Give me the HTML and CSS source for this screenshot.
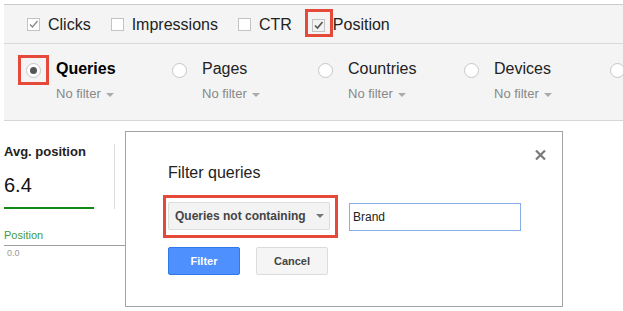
FILE: index.html
```html
<!DOCTYPE html>
<html lang="en">

<head>
    <meta charset="UTF-8">
    <meta name="viewport" content="width=device-width, initial-scale=1.0">
    <title>Search Analytics</title>
    <link rel="stylesheet" href="styles.css">
</head>

<body>
    <div class="panel">
        <div class="metrics">
            <label class="metric">
                <span class="box"><svg width="13" height="13" viewBox="0 0 13 13"><path d="M3 6.5 5.5 9 10.5 3" fill="none" stroke="#8a8a8a" stroke-width="1.4"/></svg></span>
                Clicks
            </label>
            <label class="metric">
                <span class="box"></span>
                Impressions
            </label>
            <label class="metric">
                <span class="box"></span>
                CTR
            </label>
            <label class="metric">
                <span class="hl hl-check">
                    <span class="box box-on"><svg width="13" height="13" viewBox="0 0 13 13"><path d="M3 6.5 5.5 9 10.5 3" fill="none" stroke="#555" stroke-width="1.6"/></svg></span>
                </span>
                Position
            </label>
        </div>
        <div class="dims">
            <div class="dim">
                <span class="hl hl-radio"><span class="radio on"></span></span>
                <div>
                    <div class="dim-name active">Queries</div>
                    <div class="dim-filter">No filter<span class="caret"></span></div>
                </div>
            </div>
            <div class="dim">
                <span class="radio"></span>
                <div>
                    <div class="dim-name">Pages</div>
                    <div class="dim-filter">No filter<span class="caret"></span></div>
                </div>
            </div>
            <div class="dim">
                <span class="radio"></span>
                <div>
                    <div class="dim-name">Countries</div>
                    <div class="dim-filter">No filter<span class="caret"></span></div>
                </div>
            </div>
            <div class="dim">
                <span class="radio"></span>
                <div>
                    <div class="dim-name">Devices</div>
                    <div class="dim-filter">No filter<span class="caret"></span></div>
                </div>
            </div>
            <div class="dim">
                <span class="radio"></span>
            </div>
        </div>
    </div>

    <div class="summary">
        <div class="card">
            <div class="card-title">Avg. position</div>
            <div class="card-value">6.4</div>
        </div>
        <div class="divider"></div>
    </div>

    <div class="chart">
        <div class="chart-label">Position</div>
        <div class="axis">0.0</div>
    </div>

    <div class="dialog">
        <span class="close"><svg width="11" height="10" viewBox="0 0 11 10"><path d="M1 0.5 10 9.5M10 0.5 1 9.5" stroke="#7a7a7a" stroke-width="2.2"/></svg></span>
        <h3 class="dialog-title">Filter queries</h3>
        <div class="filter-row">
            <span class="hl hl-select">
                <span class="select">Queries not containing<span class="select-arrow"></span></span>
            </span>
            <input class="text-input" type="text" value="Brand">
        </div>
        <div class="buttons">
            <button class="btn btn-blue">Filter</button>
            <button class="btn">Cancel</button>
        </div>
    </div>
</body>

</html>
```

FILE: styles.css
```css
* {
    padding: 0;
    margin: 0;
    box-sizing: border-box;
}

body {
    font-family: "Liberation Sans", Arial, sans-serif;
    color: #222;
    overflow: hidden;
}

.panel {
    margin: 4px 0 0 4px;
    background: #f4f4f4;
    border-top: 1px solid #ccc;
    border-bottom: 1px solid #d6d6d6;
}

/* metric checkboxes */
.metrics {
    display: flex;
    align-items: center;
    gap: 20px;
    height: 39px;
    padding: 1px 0 0 23px;
    border-bottom: 1px solid #d9d9d9;
}

.metric {
    display: flex;
    align-items: center;
    gap: 8px;
    font-size: 16px;
    color: #222;
}

.box {
    display: block;
    width: 13px;
    height: 13px;
    border: 1px solid #c3c3c3;
    background: #fff;
}

.box svg {
    display: block;
    margin: -1px 0 0 -1px;
}

.box-on {
    background: #f2f2f2;
}

.hl {
    display: block;
    border: 3px solid #e5493a;
}

.hl-check {
    padding: 7px 5px 2px 4px;
    margin: 0 -8px 4px -7px;
}

/* dimension radios */
.dims {
    display: flex;
    height: 76px;
    padding: 15px 0 0 22px;
    overflow: hidden;
}

.dim {
    flex: 0 0 146px;
    display: flex;
    align-items: flex-start;
    gap: 15px;
}

.radio {
    display: block;
    flex: none;
    width: 15px;
    height: 15px;
    margin-top: 4px;
    border: 1px solid #c6c6c6;
    border-radius: 50%;
    background: #fff;
    position: relative;
}

.radio.on::after {
    content: "";
    position: absolute;
    left: 3px;
    top: 3px;
    width: 7px;
    height: 7px;
    border-radius: 50%;
    background: #555;
}

.hl-radio {
    padding: 5px 5px 4px 5px;
    margin: -4px -8px 0 -8px;
}

.hl-radio .radio {
    margin-top: 0;
}

.dim-name {
    font-size: 16px;
    line-height: 20px;
    color: #222;
    white-space: nowrap;
}

.dim-name.active {
    font-weight: bold;
    color: #000;
}

.dim-filter {
    margin-top: 7px;
    font-size: 13px;
    line-height: 16px;
    color: #888;
}

.caret {
    display: inline-block;
    margin-left: 5px;
    vertical-align: middle;
    border-top: 4px solid #aaa;
    border-left: 4px solid transparent;
    border-right: 4px solid transparent;
}

/* summary card */
.summary {
    display: flex;
    margin-left: 4px;
    padding-top: 23px;
}

.card {
    width: 90px;
    padding-bottom: 10px;
    border-bottom: 2px solid #138a17;
}

.card-title {
    font-size: 13px;
    line-height: 16px;
    font-weight: bold;
    color: #222;
    white-space: nowrap;
}

.card-value {
    margin-top: 13px;
    font-size: 20px;
    line-height: 24px;
    color: #111;
}

.divider {
    width: 1px;
    margin-left: 20px;
    background: #ddd;
}

.chart {
    width: 450px;
    margin: 20px 0 0 4px;
}

.chart-label {
    font-size: 11px;
    line-height: 13px;
    padding-bottom: 3px;
    color: #3f9a3f;
    border-bottom: 1px solid #9e9e9e;
}

.axis {
    margin-top: 2px;
    padding-left: 3px;
    font-size: 9px;
    line-height: 11px;
    color: #999;
}

/* dialog */
.dialog {
    position: absolute;
    left: 125px;
    top: 131px;
    width: 438px;
    height: 176px;
    padding: 31px 0 0 42px;
    background: #fff;
    border: 1px solid #a3a3a3;
}

.close {
    position: absolute;
    left: 409px;
    top: 18px;
    line-height: 0;
}

.dialog-title {
    font-size: 16px;
    line-height: 20px;
    font-weight: normal;
    color: #222;
}

.filter-row {
    display: flex;
    align-items: center;
    margin-top: 12px;
}

.hl-select {
    padding: 4px 5px 5px 2px;
    margin-left: -5px;
}

.select {
    display: flex;
    align-items: center;
    width: 162px;
    height: 28px;
    padding: 0 5px 0 6px;
    background: #f3f3f3;
    border: 1px solid #dcdcdc;
    border-radius: 2px;
    font-size: 12px;
    font-weight: bold;
    color: #444;
}

.select-arrow {
    margin-left: auto;
    border-top: 4px solid #777;
    border-left: 4px solid transparent;
    border-right: 4px solid transparent;
}

.text-input {
    width: 172px;
    height: 28px;
    margin-left: 11px;
    padding: 0 3px;
    border: 1px solid #88aee9;
    font-family: "Liberation Sans", Arial, sans-serif;
    font-size: 12px;
    color: #222;
    outline: none;
}

.buttons {
    display: flex;
    gap: 16px;
    margin-top: 9px;
}

.btn {
    width: 72px;
    height: 28px;
    border: 1px solid #dcdcdc;
    border-radius: 2px;
    background: #f5f5f5;
    font-family: "Liberation Sans", Arial, sans-serif;
    font-size: 11px;
    font-weight: bold;
    color: #444;
}

.btn-blue {
    background: #4d90fe;
    border-color: #3079ed;
    color: #fff;
}
```
